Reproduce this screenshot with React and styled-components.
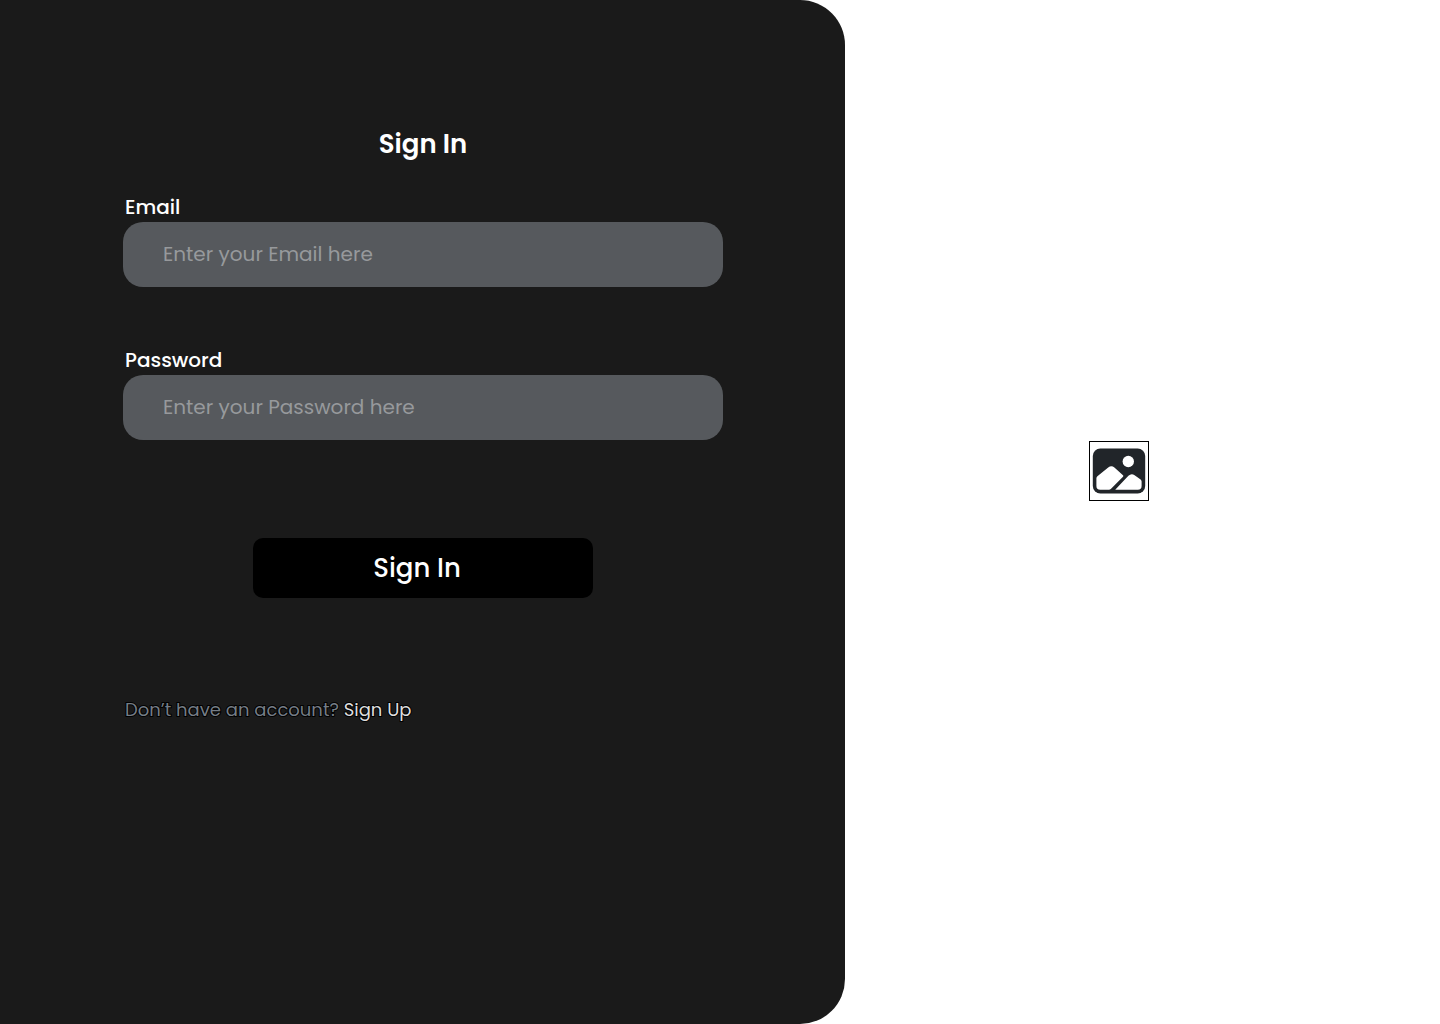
import React from "react";
import styled, { createGlobalStyle } from "styled-components";

const GlobalStyle = createGlobalStyle`
  *, *::before, *::after { box-sizing: border-box; }
  body {
    margin: 0;
    background: #ffffff;
    font-family: Poppins, Inter, "Liberation Sans", sans-serif;
  }
`;

const Page = styled.div`
  display: grid;
  grid-template-columns: minmax(0, 845fr) minmax(0, 595fr);
  min-height: 100vh;
`;

const FormPanel = styled.main`
  padding: 124px 122px 80px 123px;
  background: #1a1a1a;
  border-radius: 0 45px 45px 0;
`;

const Form = styled.form`
  display: flex;
  flex-direction: column;
  max-width: 600px;
  margin: 0 auto;
`;

const Title = styled.h1`
  margin: 0 0 28px;
  color: #ffffff;
  font-size: 26px;
  font-weight: 600;
  line-height: 40px;
  text-align: center;
`;

const Field = styled.div`
  display: flex;
  flex-direction: column;
  margin-bottom: 58px;
`;

const Label = styled.label`
  padding: 0 2px;
  color: #ffffff;
  font-size: 20px;
  font-weight: 500;
  line-height: 30px;
`;

const TextInput = styled.input`
  width: 100%;
  height: 65px;
  padding: 0 40px 2px;
  border: 0;
  border-radius: 20px;
  background: #56595d;
  color: #ffffff;
  font-family: inherit;
  font-size: 20px;

  &::placeholder {
    color: #97999c;
    opacity: 1;
  }
`;

const SubmitButton = styled.button`
  align-self: center;
  width: 340px;
  max-width: 100%;
  height: 60px;
  margin: 40px 0 92px;
  padding: 0 12px 0 0;
  border: 0;
  border-radius: 10px;
  background: #000000;
  color: #ffffff;
  font-family: inherit;
  font-size: 26px;
  font-weight: 500;
  cursor: pointer;
`;

const Prompt = styled.p`
  margin: 0;
  padding: 0 2px;
  color: #757d86;
  font-size: 18px;
  line-height: 40px;
  -webkit-text-stroke: 2px #000000;
  paint-order: stroke fill;
`;

const PromptLink = styled.a`
  color: #dedede;
  text-decoration: none;
`;

const PicturePanel = styled.aside`
  display: flex;
  align-items: center;
  justify-content: center;
  padding: 0 47px 82px 0;
`;

const PictureFrame = styled.div`
  display: flex;
  width: 60px;
  height: 60px;
  border: 1px solid #000000;
`;

function PictureIcon() {
  return (
    <svg width="58" height="58" viewBox="1 1 58 58" role="img" aria-label="Picture">
      <rect x="3.8" y="7.5" width="52.4" height="45" rx="7.5" fill="#212529" />
      <circle cx="39.3" cy="20.5" r="5.7" fill="#fff" />
      <path
        fill="#fff"
        d="M7.4 37.2Q7.4 36 8.4 35.2L19.2 26.5Q22.4 24 25.4 26.5L34 34.2Q34.8 35 34 35.8L21.8 48Q21 48.8 20 48.8H11.2Q7.4 48.8 7.4 45Z"
      />
      <path
        fill="#fff"
        d="M26.2 48.8L39.4 34.8Q42.4 31.8 45.6 34.2L51.6 38.6Q52.6 39.4 52.6 40.6V45Q52.6 48.8 48.8 48.8Z"
      />
    </svg>
  );
}

function TextField({ id, label, ...inputProps }) {
  return (
    <Field>
      <Label htmlFor={id}>{label}</Label>
      <TextInput id={id} name={id} {...inputProps} />
    </Field>
  );
}

export default function App() {
  return (
    <>
      <GlobalStyle />
      <Page>
        <FormPanel>
          <Form onSubmit={(event) => event.preventDefault()}>
            <Title>Sign In</Title>
            <TextField id="email" label="Email" type="email" placeholder="Enter your Email here" />
            <TextField id="password" label="Password" type="password" placeholder="Enter your Password here" />
            <SubmitButton type="submit">Sign In</SubmitButton>
            <Prompt>
              Don’t have an account? <PromptLink href="#sign-up">Sign Up</PromptLink>
            </Prompt>
          </Form>
        </FormPanel>
        <PicturePanel>
          <PictureFrame>
            <PictureIcon />
          </PictureFrame>
        </PicturePanel>
      </Page>
    </>
  );
}
